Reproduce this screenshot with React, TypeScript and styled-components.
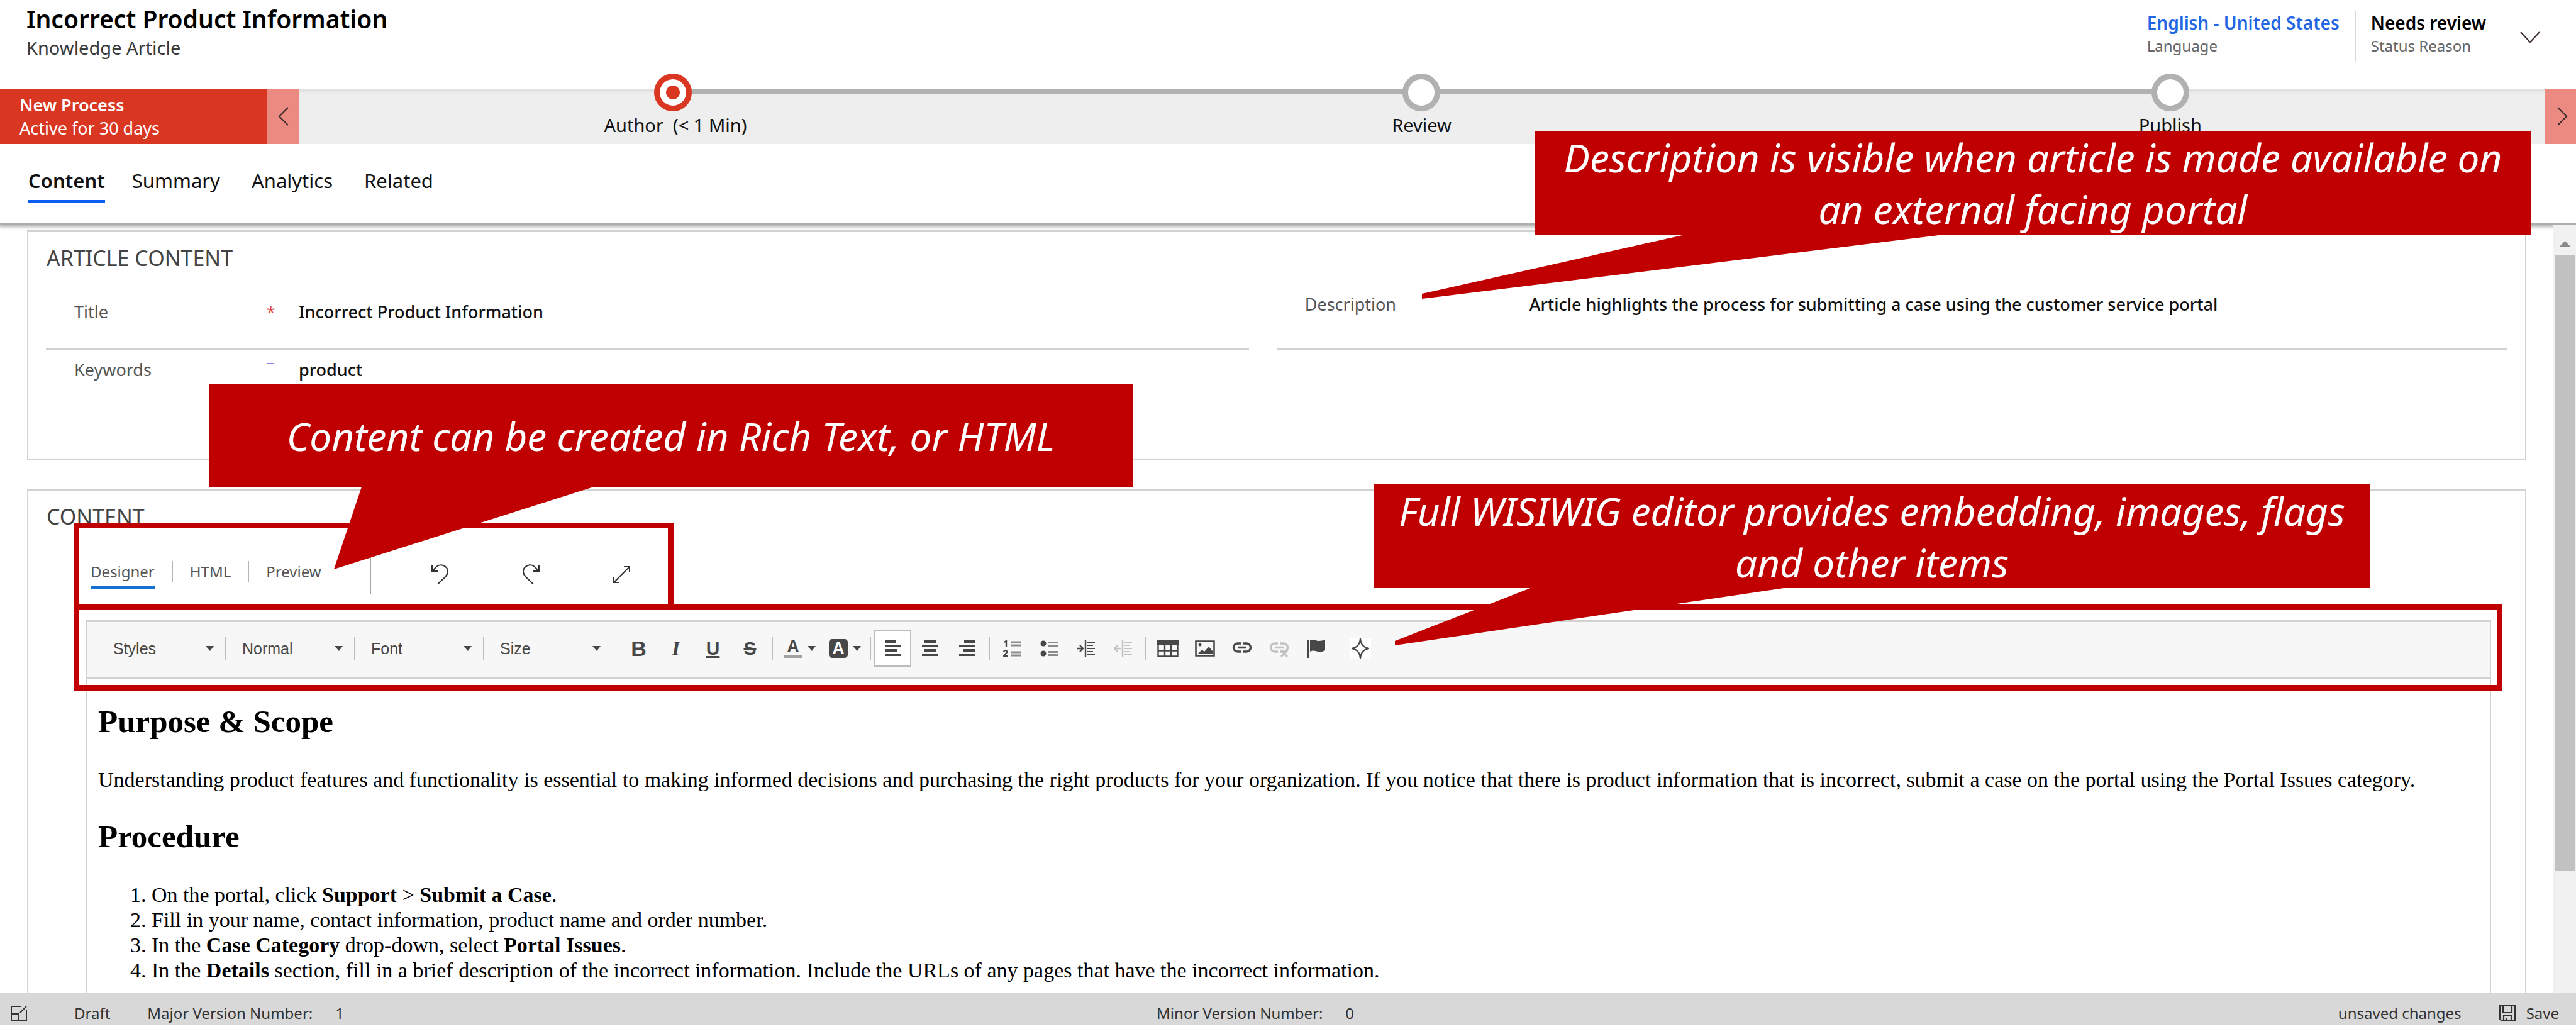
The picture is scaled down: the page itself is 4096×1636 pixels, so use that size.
import React from 'react';
import styled, { createGlobalStyle, css } from 'styled-components';

const ui = '"Noto Sans", "Open Sans", sans-serif';
const arial = '"Liberation Sans", Arial, sans-serif';
const serif = '"Liberation Serif", "Times New Roman", serif';
const accent = '#c00000';
const line = '#d2d2d2';

const GlobalStyle = createGlobalStyle`
  *, *::before, *::after { box-sizing: border-box; }
  body { margin: 0; background: #fff; }
  button, input, select { font: inherit; color: inherit; margin: 0; padding: 0; border: 0; background: none; border-radius: 0; }
  button { cursor: pointer; }
  h1, h2, h3, p, ol { margin: 0; font-weight: inherit; }
  svg { display: block; flex: none; }
`;

const Page = styled.div`
  position: relative;
  display: flex;
  flex-direction: column;
  width: 100%;
  min-height: 100vh;
  padding-bottom: 6px;
  overflow: hidden;
  font-family: ${ui};
  color: #111;
  background: #fff;
`;

/* Record header */
const Header = styled.header`
  display: flex;
  justify-content: space-between;
  height: 141px;
`;
const Heading = styled.div`
  padding: 6px 0 0 42px;
`;
const RecordTitle = styled.h1`
  font-size: 39px;
  line-height: 48px;
  font-weight: 600;
  color: #000;
`;
const RecordType = styled.p`
  padding-top: 4px;
  font-size: 29px;
  line-height: 36px;
  color: #3b3b3b;
`;
const Meta = styled.div`
  display: flex;
  align-items: flex-start;
  padding: 18px 57px 0 0;
`;
const MetaItem = styled.div`
  height: 81px;
  padding: 0 24px;
  & + & { border-left: 2px solid #d8d8d8; }
`;
const metaValue = css`
  display: block;
  font-size: 28px;
  line-height: 36px;
  font-weight: 600;
  text-decoration: none;
`;
const MetaLink = styled.a`
  ${metaValue}
  color: #2266e3;
`;
const MetaText = styled.span`
  ${metaValue}
  color: #000;
`;
const MetaLabel = styled.span`
  display: block;
  padding-top: 3px;
  font-size: 24px;
  line-height: 32px;
  color: #666;
`;
const ExpandButton = styled.button`
  margin: 26px 0 0 30px;
`;

/* Business process bar */
const ProcessBar = styled.section`
  position: relative;
  display: flex;
  height: 88px;
  background: linear-gradient(#dcdcdc, #eee 8px);
`;
const ProcessName = styled.div`
  width: 425px;
  padding: 7px 31px;
  font-size: 27px;
  line-height: 37px;
  color: #fff;
  background: #da3722;
`;
const Strong = styled.strong`
  font-weight: 600;
`;
const ProcessButton = styled.button<{ $end?: boolean }>`
  display: flex;
  align-items: center;
  justify-content: center;
  width: 50px;
  padding-left: ${p => (p.$end ? 8 : 0)}px;
  background: #eb8a80;
`;
const Stages = styled.ol`
  flex: 1;
  display: grid;
  grid-template-columns: repeat(3, 1fr);
  padding: 0;
  list-style: none;
`;
const Stage = styled.li<{ $edge?: 'first' | 'last' }>`
  position: relative;
  display: flex;
  flex-direction: column;
  align-items: center;
  gap: 4px;
  &::before {
    content: '';
    position: absolute;
    top: 1px;
    left: ${p => (p.$edge === 'first' ? '50%' : '0')};
    right: ${p => (p.$edge === 'last' ? '50%' : '0')};
    height: 7px;
    background: #b1b1b1;
  }
`;
const Ring = styled.span<{ $active?: boolean }>`
  position: relative;
  display: flex;
  align-items: center;
  justify-content: center;
  width: 60px;
  height: 60px;
  margin-top: -24px;
  border: 9px solid ${p => (p.$active ? '#da3722' : '#b1b1b1')};
  border-radius: 50%;
  background: #fff;
  &::after {
    content: '';
    width: 22px;
    height: 22px;
    border-radius: 50%;
    background: ${p => (p.$active ? '#da3722' : 'transparent')};
  }
`;
const StageName = styled.span`
  font-size: 29px;
  line-height: 36px;
  white-space: pre;
`;

/* Form tabs */
const Tabs = styled.nav`
  display: flex;
  align-items: flex-start;
  gap: 43px;
  height: 129px;
  padding: 38px 45px 0;
  border-bottom: 3px solid #adadad;
  box-shadow: 0 1px 5px 2px rgba(0, 0, 0, 0.3);
`;
const Tab = styled.button<{ $active?: boolean }>`
  padding: 0 ${p => (p.$active ? 0 : 7)}px 11px 0;
  font-size: 31px;
  line-height: 40px;
  font-weight: ${p => (p.$active ? 600 : 400)};
  border-bottom: 5px solid ${p => (p.$active ? '#0a5cf5' : 'transparent')};
`;

/* Body */
const Body = styled.div`
  flex: 1;
  display: flex;
`;
const Sections = styled.main`
  flex: 1;
  min-width: 0;
  display: flex;
  flex-direction: column;
  gap: 45px;
  padding: 8px 42px 0 43px;
`;
const Panel = styled.section<{ $grow?: boolean }>`
  display: flex;
  flex-direction: column;
  flex: ${p => (p.$grow ? 1 : 'none')};
  padding-top: 19px;
  border: solid ${line};
  border-width: 3px 2px ${p => (p.$grow ? 0 : 3)}px;
`;
const PanelTitle = styled.h2`
  padding-left: 29px;
  font-size: 34px;
  line-height: 44px;
  color: #444;
`;
const Fields = styled.div`
  display: grid;
  grid-template-columns: 44fr 45fr;
  column-gap: 44px;
  padding: 0 29px 0 28px;
`;
const Field = styled.div<{ $place?: 'lower' | 'upper' | 'open' }>`
  display: grid;
  grid-template-columns: 306px 51px 1fr;
  align-items: ${p => (p.$place === 'open' ? 'start' : 'center')};
  height: ${p => (p.$place === 'open' ? 173 : 124)}px;
  padding-left: 45px;
  font-size: 27px;
  line-height: 36px;
  ${p => p.$place === 'lower' && 'padding-top: 6px;'}
  ${p => p.$place === 'upper' && 'padding-bottom: 18px;'}
  ${p => p.$place === 'open' && 'padding-top: 14px;'}
  ${p => p.$place !== 'open' && `border-bottom: 3px solid ${line};`}
`;
const FieldLabel = styled.label`
  color: #555;
`;
const Mark = styled.span<{ $tone: string }>`
  color: ${p => p.$tone};
  font-size: 24px;
`;
const FieldInput = styled.input`
  width: 100%;
  min-width: 0;
  height: 36px;
  font-weight: 500;
  color: #111;
  outline: 0;
`;

/* Article editor */
const ViewBar = styled.div`
  display: flex;
  align-items: center;
  height: 143px;
  padding: 0 0 12px 99px;
`;
const ViewTab = styled.button<{ $active?: boolean }>`
  padding: 7px 0;
  font-size: 24px;
  line-height: 32px;
  color: #555;
  border: solid transparent;
  border-width: 5px 0;
  border-bottom-color: ${p => (p.$active ? '#1570cf' : 'transparent')};
`;
const ViewRule = styled.span`
  width: 2px;
  height: 34px;
  margin: 0 27px;
  background: #b5b5b5;
`;
const ActionRule = styled.span`
  width: 2px;
  height: 72px;
  margin: 0 94px 0 77px;
  background: #a5a5a5;
`;
const Actions = styled.div`
  display: flex;
  gap: 112px;
  padding-top: 8px;
  color: #333;
`;
const Editor = styled.div`
  flex: 1;
  display: flex;
  flex-direction: column;
  margin: 0 54px 0 92px;
  border: solid ${line};
  border-width: 0 2px;
`;
const Toolbar = styled.div`
  display: flex;
  align-items: center;
  height: 93px;
  padding: 0 16px 4px;
  font-family: ${arial};
  font-size: 25px;
  color: #474747;
  background: #f7f7f7;
  border: solid ${line};
  border-width: 3px 0;
`;
const Combo = styled.span<{ $last?: boolean }>`
  display: grid;
  align-items: center;
  width: 205px;
  height: 38px;
  border-right: 2px solid ${p => (p.$last ? 'transparent' : '#bdbdbd')};
  & > * { grid-area: 1 / 1; }
  & > svg { justify-self: end; margin-right: 18px; pointer-events: none; }
`;
const ComboSelect = styled.select`
  appearance: none;
  width: 100%;
  height: 36px;
  padding-left: 25px;
  outline: 0;
`;
const ToolGroup = styled.div<{ $lead?: boolean }>`
  display: flex;
  margin-left: ${p => (p.$lead ? 11 : 0)}px;
`;
const ToolRule = styled.span`
  width: 2px;
  height: 38px;
  margin: 0 5px;
  background: #bdbdbd;
`;
const Tool = styled.button<{ $active?: boolean; $menu?: boolean; $muted?: boolean }>`
  display: flex;
  align-items: center;
  justify-content: ${p => (p.$menu ? 'flex-start' : 'center')};
  gap: 8px;
  width: ${p => (p.$menu ? 72 : 59)}px;
  height: 58px;
  padding-left: ${p => (p.$menu ? 12 : 0)}px;
  opacity: ${p => (p.$muted ? 0.3 : 1)};
  ${p => p.$active && 'background: #fff; border: 2px solid #bdbdbd;'}
`;
const Glyph = styled.span<{ $kind: 'bold' | 'italic' | 'underline' | 'strike' }>`
  font-family: ${p => (p.$kind === 'italic' ? serif : arial)};
  font-size: ${p => (p.$kind === 'bold' || p.$kind === 'italic' ? 34 : 30)}px;
  line-height: 36px;
  font-weight: 700;
  font-style: ${p => (p.$kind === 'italic' ? 'italic' : 'normal')};
  text-decoration: ${p => (p.$kind === 'underline' ? 'underline' : p.$kind === 'strike' ? 'line-through' : 'none')};
`;
const Letter = styled.span<{ $filled?: boolean }>`
  width: 30px;
  height: 30px;
  font-size: 27px;
  line-height: ${p => (p.$filled ? 30 : 24)}px;
  font-weight: 700;
  text-align: center;
  ${p => (p.$filled ? 'color: #fff; background: #474747; border-radius: 5px;' : 'border-bottom: 5px solid #a3a3a3;')}
`;
const Article = styled.article`
  padding: 38px 17px 0;
  font-family: ${serif};
  font-size: 34px;
  line-height: 40px;
  color: #000;
`;
const ArticleHeading = styled.h3`
  margin-bottom: 43px;
  font-size: 51px;
  line-height: 60px;
  font-weight: 700;
`;
const Paragraph = styled.p`
  margin-bottom: 40px;
`;
const Steps = styled.ol`
  padding-left: 85px;
`;

/* Scroll bar */
const ScrollBar = styled.div`
  display: flex;
  flex-direction: column;
  width: 37px;
  padding: 0 1px 0 3px;
  background: #f1f1f1;
`;
const ScrollUp = styled.button`
  display: flex;
  align-items: center;
  justify-content: center;
  height: 48px;
  padding-top: 10px;
`;
const ScrollThumb = styled.div`
  flex: 979;
  background: #c1c1c1;
`;
const ScrollRest = styled.div`
  flex: 194;
`;

/* Status bar */
const StatusBar = styled.footer`
  position: relative;
  display: grid;
  grid-template-columns: 44.9% 1fr auto;
  align-items: center;
  height: 51px;
  padding-top: 12px;
  font-size: 24px;
  line-height: 32px;
  color: #333;
  background: #d8d8d8;
`;
const StatusGroup = styled.div<{ $pad?: boolean }>`
  display: flex;
  align-items: center;
  padding: ${p => (p.$pad ? '0 27px 0 16px' : '0')};
`;
const StatusText = styled.span<{ $gap?: number }>`
  margin-left: ${p => p.$gap || 0}px;
`;
const SaveButton = styled.button`
  display: flex;
  align-items: center;
  gap: 16px;
  margin-left: 59px;
`;

/* Annotations */
const Highlight = styled.div<{ $area: 'views' | 'toolbar' }>`
  position: absolute;
  left: 117px;
  border: 9px solid ${accent};
  pointer-events: none;
  ${p => (p.$area === 'views' ? 'top: 831px; width: 954px; height: 138px;' : 'top: 961px; right: 117px; height: 137px;')}
`;
const Callout = styled.aside<{ $spot: 'description' | 'content' | 'editor' }>`
  position: absolute;
  display: flex;
  align-items: center;
  justify-content: center;
  height: 165px;
  padding: 0 24px;
  font-size: 62px;
  line-height: 82px;
  font-style: italic;
  text-align: center;
  color: #fff;
  background: ${accent};
  ${p => p.$spot === 'description' && 'top: 208px; right: 71px; width: 1585px;'}
  ${p => p.$spot === 'content' && 'top: 610px; left: 332px; width: 1469px;'}
  ${p => p.$spot === 'editor' && 'top: 770px; right: 327px; width: 1585px;'}
`;
const Tail = styled.svg`
  position: absolute;
  left: 0;
  top: 164px;
  overflow: visible;
  fill: ${accent};
`;

/* Icons */
const stroke = { fill: 'none', stroke: 'currentColor' } as const;

const Chevron = ({ d, w, h }: { d: string; w: number; h: number }) => (
  <svg width={w} height={h} fill="none" stroke="#3a2a2a" strokeWidth="2"><path d={d} /></svg>
);
const Caret = () => (
  <svg width="13" height="8" fill="currentColor"><path d="M0 0h13L7 8z" /></svg>
);
const UndoIcon = () => (
  <svg width="32" height="34" {...stroke} strokeWidth="2"><path d="M3 2v10h10M3 12 10 5C17-1 28 4 28 13c0 7-9 12-16 20" /></svg>
);
const RedoIcon = () => (
  <svg width="32" height="34" {...stroke} strokeWidth="2"><path d="M29 2v10H19M29 12 22 5C15-1 4 4 4 13c0 7 9 12 16 20" /></svg>
);
const ExpandIcon = () => (
  <svg width="32" height="34" {...stroke} strokeWidth="2"><path d="M4 30 29 5M20 5h9v9M4 21v9h9" /></svg>
);
const AlignIcon = ({ side }: { side: 'left' | 'center' | 'right' }) => (
  <svg width="26" height="26" fill="currentColor">
    {[18, 26, 20, 26].map((w, i) => (
      <rect key={i} x={side === 'left' ? 0 : side === 'right' ? 26 - w : (26 - w) / 2} y={i * 7} width={w} height="4" />
    ))}
  </svg>
);
const NumberListIcon = () => (
  <svg width="28" height="28" {...stroke} strokeWidth="2.4">
    <path d="M2 4l3-2v9M1 19c1-3 6-2 5 1-1 2-4 4-5 6h6" />
    <path d="M12 4h16M12 9h16M12 20h16M12 25h16" stroke="#8b8b8b" strokeWidth="3" />
  </svg>
);
const BulletListIcon = () => (
  <svg width="28" height="28" fill="currentColor">
    <circle cx="5" cy="6" r="4.5" /><circle cx="5" cy="22" r="4.5" />
    <path d="M13 3h15v3H13zM13 8h15v3H13zM13 18h15v3H13zM13 23h15v3H13z" fill="#8b8b8b" />
  </svg>
);
const IndentIcon = ({ out }: { out?: boolean }) => (
  <svg width="30" height="28" {...stroke} strokeWidth="2.4">
    <path d={out ? 'M12 14H1M6 9l-5 5 5 5' : 'M0 14h10M5 9l5 5-5 5'} />
    <path d="M14 0v28" />
    <path d="M17 4h12M17 9h9M17 14h12M17 19h9M17 24h12" strokeWidth="2.2" />
  </svg>
);
const TableIcon = () => (
  <svg width="34" height="28" {...stroke} strokeWidth="2.4">
    <path d="M1.5 2h31v24.5h-31zM12 2v25M22 2v25M1 17.5h32" />
    <path d="M0 0h34v8H0z" fill="currentColor" stroke="none" />
  </svg>
);
const ImageIcon = () => (
  <svg width="32" height="26" {...stroke} strokeWidth="2.6">
    <path d="M1.5 1.5h29v23h-29z" />
    <path d="M4 22l7-7 4 3 7-8 6 7v5z" fill="currentColor" stroke="none" />
    <circle cx="8" cy="7" r="2.5" fill="currentColor" stroke="none" />
  </svg>
);
const LinkIcon = ({ cut }: { cut?: boolean }) => (
  <svg width="32" height="28" {...stroke} strokeWidth="3.4">
    <path d="M14 6H9a6 6 0 0 0 0 13h5M18 6h5a6 6 0 0 1 0 13h-5M9 12.5h14" />
    {cut && <path d="M19 17l10 10M29 17L19 27" strokeWidth="3" />}
  </svg>
);
const FlagIcon = () => (
  <svg width="30" height="30" fill="currentColor">
    <path d="M1 1h3v29H1zM5 2c6-3 9 1 14 1 4 0 6-1 10-2v17c-4 2-7 3-11 2-5-1-8-3-13 0z" />
  </svg>
);
const SparkleIcon = () => (
  <svg width="34" height="34" {...stroke} strokeWidth="2.4" strokeLinejoin="round">
    <path d="M0 0h34v34H0z" fill="#fff" stroke="none" />
    <path d="M17 2c1 9 5 13 13 15-8 2-12 6-13 15-1-9-5-13-13-15 8-2 12-6 13-15z" />
  </svg>
);
const PopOutIcon = () => (
  <svg width="28" height="26" {...stroke} strokeWidth="2">
    <path d="M18 2H2v22h24V8M2 14h11v10M16 12 26 2" />
  </svg>
);
const SaveIcon = () => (
  <svg width="28" height="28" {...stroke} strokeWidth="2.2">
    <path d="M2 2h24v24H5l-3-3zM7 2v11h14V2M8 26v-8h12v8M12 26v-5" />
  </svg>
);

const Combos = ['Styles', 'Normal', 'Font', 'Size'];

export default function App() {
  return (
    <>
      <GlobalStyle />
      <Page>
        <Header>
          <Heading>
            <RecordTitle>Incorrect Product Information</RecordTitle>
            <RecordType>Knowledge Article</RecordType>
          </Heading>
          <Meta>
            <MetaItem>
              <MetaLink href="#language">English - United States</MetaLink>
              <MetaLabel>Language</MetaLabel>
            </MetaItem>
            <MetaItem>
              <MetaText>Needs review</MetaText>
              <MetaLabel>Status Reason</MetaLabel>
            </MetaItem>
            <ExpandButton aria-label="Show more header fields">
              <Chevron d="M1 7l15 16L31 7" w={32} h={28} />
            </ExpandButton>
          </Meta>
        </Header>

        <ProcessBar>
          <ProcessName>
            <Strong>New Process</Strong>
            <br />
            Active for 30 days
          </ProcessName>
          <ProcessButton aria-label="Previous stage"><Chevron d="M17 1L3 15l14 14" w={18} h={30} /></ProcessButton>
          <Stages>
            <Stage $edge="first"><Ring $active /><StageName>{' Author  (< 1 Min)'}</StageName></Stage>
            <Stage><Ring /><StageName>Review</StageName></Stage>
            <Stage $edge="last"><Ring /><StageName>Publish</StageName></Stage>
          </Stages>
          <ProcessButton $end aria-label="Next stage"><Chevron d="M1 1l14 14L1 29" w={18} h={30} /></ProcessButton>
        </ProcessBar>

        <Tabs>
          <Tab $active>Content</Tab>
          <Tab>Summary</Tab>
          <Tab>Analytics</Tab>
          <Tab>Related</Tab>
        </Tabs>

        <Body>
          <Sections>
            <Panel>
              <PanelTitle>ARTICLE CONTENT</PanelTitle>
              <Fields>
                <Field $place="lower">
                  <FieldLabel htmlFor="title">Title</FieldLabel>
                  <Mark $tone="#e0403c">*</Mark>
                  <FieldInput id="title" defaultValue="Incorrect Product Information" />
                </Field>
                <Field $place="upper">
                  <FieldLabel htmlFor="description">Description</FieldLabel>
                  <span />
                  <FieldInput
                    id="description"
                    defaultValue="Article highlights the process for submitting a case using the customer service portal"
                  />
                </Field>
                <Field $place="open">
                  <FieldLabel htmlFor="keywords">Keywords</FieldLabel>
                  <Mark $tone="#1a1ae0">¯</Mark>
                  <FieldInput id="keywords" defaultValue="product" />
                </Field>
              </Fields>
            </Panel>

            <Panel $grow>
              <PanelTitle>CONTENT</PanelTitle>
              <ViewBar>
                <ViewTab $active>Designer</ViewTab>
                <ViewRule />
                <ViewTab>HTML</ViewTab>
                <ViewRule />
                <ViewTab>Preview</ViewTab>
                <ActionRule />
                <Actions>
                  <button aria-label="Undo"><UndoIcon /></button>
                  <button aria-label="Redo"><RedoIcon /></button>
                  <button aria-label="Full screen"><ExpandIcon /></button>
                </Actions>
              </ViewBar>
              <Editor>
                <Toolbar>
                  {Combos.map((name, i) => (
                    <Combo key={name} $last={i === Combos.length - 1}>
                      <ComboSelect aria-label={name} defaultValue={name}>
                        <option>{name}</option>
                      </ComboSelect>
                      <Caret />
                    </Combo>
                  ))}
                  <ToolGroup $lead>
                    <Tool><Glyph $kind="bold">B</Glyph></Tool>
                    <Tool><Glyph $kind="italic">I</Glyph></Tool>
                    <Tool><Glyph $kind="underline">U</Glyph></Tool>
                    <Tool><Glyph $kind="strike">S</Glyph></Tool>
                  </ToolGroup>
                  <ToolRule />
                  <ToolGroup>
                    <Tool $menu><Letter>A</Letter><Caret /></Tool>
                    <Tool $menu><Letter $filled>A</Letter><Caret /></Tool>
                  </ToolGroup>
                  <ToolRule />
                  <ToolGroup>
                    <Tool $active aria-label="Align left"><AlignIcon side="left" /></Tool>
                    <Tool aria-label="Center"><AlignIcon side="center" /></Tool>
                    <Tool aria-label="Align right"><AlignIcon side="right" /></Tool>
                  </ToolGroup>
                  <ToolRule />
                  <ToolGroup>
                    <Tool aria-label="Numbered list"><NumberListIcon /></Tool>
                    <Tool aria-label="Bulleted list"><BulletListIcon /></Tool>
                    <Tool aria-label="Increase indent"><IndentIcon /></Tool>
                    <Tool $muted aria-label="Decrease indent"><IndentIcon out /></Tool>
                  </ToolGroup>
                  <ToolRule />
                  <ToolGroup>
                    <Tool aria-label="Table"><TableIcon /></Tool>
                    <Tool aria-label="Image"><ImageIcon /></Tool>
                    <Tool aria-label="Link"><LinkIcon /></Tool>
                    <Tool $muted aria-label="Unlink"><LinkIcon cut /></Tool>
                    <Tool aria-label="Anchor"><FlagIcon /></Tool>
                  </ToolGroup>
                  <ToolGroup $lead>
                    <Tool aria-label="Insert article"><SparkleIcon /></Tool>
                  </ToolGroup>
                </Toolbar>
                <Article>
                  <ArticleHeading>Purpose &amp; Scope</ArticleHeading>
                  <Paragraph>
                    Understanding product features and functionality is essential to making informed decisions and
                    purchasing the right products for your organization. If you notice that there is product information
                    that is incorrect, submit a case on the portal using the Portal Issues category.
                  </Paragraph>
                  <ArticleHeading>Procedure</ArticleHeading>
                  <Steps>
                    <li>On the portal, click <b>Support</b> &gt; <b>Submit a Case</b>.</li>
                    <li>Fill in your name, contact information, product name and order number.</li>
                    <li>In the <b>Case Category</b> drop-down, select <b>Portal Issues</b>.</li>
                    <li>
                      In the <b>Details</b> section, fill in a brief description of the incorrect information. Include
                      the URLs of any pages that have the incorrect information.
                    </li>
                  </Steps>
                </Article>
              </Editor>
            </Panel>
          </Sections>
          <ScrollBar>
            <ScrollUp aria-label="Scroll up">
              <svg width="17" height="9" fill="#8a8a8a"><path d="M0 9h17L8.5 0z" /></svg>
            </ScrollUp>
            <ScrollThumb />
            <ScrollRest />
          </ScrollBar>
        </Body>

        <StatusBar>
          <StatusGroup $pad>
            <PopOutIcon />
            <StatusText $gap={74}>Draft</StatusText>
            <StatusText $gap={59}>Major Version Number:</StatusText>
            <StatusText $gap={36}>1</StatusText>
          </StatusGroup>
          <StatusGroup>
            <StatusText>Minor Version Number:</StatusText>
            <StatusText $gap={36}>0</StatusText>
          </StatusGroup>
          <StatusGroup $pad>
            <StatusText>unsaved changes</StatusText>
            <SaveButton><SaveIcon />Save</SaveButton>
          </StatusGroup>
        </StatusBar>

        <Highlight $area="views" />
        <Highlight $area="toolbar" />
        <Callout $spot="description">
          <Tail width="1" height="1"><path d="M244 0L-179 95v8L659 0z" /></Tail>
          Description is visible when article is made available on an external facing portal
        </Callout>
        <Callout $spot="content">
          <Tail width="1" height="1"><path d="M243 0L199 131 612 0z" /></Tail>
          Content can be created in Rich Text, or HTML
        </Callout>
        <Callout $spot="editor">
          <Tail width="1" height="1"><path d="M252 0L34 85v7L659 0z" /></Tail>
          Full WISIWIG editor provides embedding, images, flags and other items
        </Callout>
      </Page>
    </>
  );
}
